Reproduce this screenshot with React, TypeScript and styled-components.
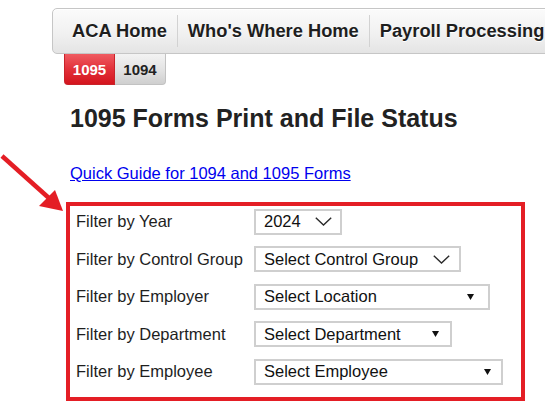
import React from "react";
import styled, { createGlobalStyle } from "styled-components";

const GlobalStyle = createGlobalStyle`
  html, body { margin: 0; padding: 0; background: #ffffff; overflow: hidden; }
  body { font-family: "Liberation Sans", Arial, sans-serif; color: #222; }
`;

const Page = styled.div`
  position: relative;
  width: 545px;
  height: 410px;
  padding-top: 8px;
  box-sizing: border-box;
  overflow: hidden;
`;

const Header = styled.div`
  padding-left: 52px;
`;

const NavBar = styled.nav`
  display: flex;
  align-items: center;
  width: max-content;
  height: 46px;
  box-sizing: border-box;
  padding-left: 9px;
  padding-right: 20px;
  border: 1px solid #c6c6c6;
  border-radius: 5px;
  background: linear-gradient(to bottom, #fbfbfb 0%, #f1f1f1 55%, #e4e4e4 100%);
  box-shadow: inset 0 1px 0 #ffffff;
`;

const NavItem = styled.span`
  padding: 0 10px;
  font-size: 18.3px;
  font-weight: bold;
  color: #1e1e1e;
  white-space: nowrap;
  text-shadow: 0 1px 0 #fff;
`;

const NavSep = styled.span`
  width: 1px;
  height: 32px;
  background: #d2d2d2;
`;

const Tabs = styled.div`
  display: flex;
  margin-left: 12px;
  width: max-content;
`;

const Tab = styled.span<{ $active?: boolean }>`
  display: flex;
  align-items: center;
  justify-content: center;
  width: 51px;
  height: 31px;
  box-sizing: border-box;
  font-size: 15px;
  font-weight: bold;
  color: ${(p) => (p.$active ? "#ffffff" : "#222")};
  background: ${(p) =>
    p.$active
      ? "linear-gradient(to bottom, #ef5b61 0%, #e2313a 50%, #d4151e 100%)"
      : "linear-gradient(to bottom, #f3f3f3 0%, #e2e2e2 55%, #cfcfcf 100%)"};
  border: 1px solid ${(p) => (p.$active ? "#c9232a" : "#c2c2c2")};
  border-top: none;
  ${(p) =>
    p.$active
      ? "border-bottom-left-radius: 4px;"
      : "border-bottom-right-radius: 4px; border-left: none;"}
`;

const Main = styled.main`
  padding-left: 70px;
`;

const Title = styled.h1`
  margin: 18px 0 0;
  font-size: 25px;
  line-height: 30px;
  font-weight: bold;
  color: #222;
`;

const GuideLink = styled.a`
  display: block;
  width: max-content;
  margin-top: 30px;
  font-size: 16.5px;
  line-height: 20px;
  color: #0000ee;
  text-decoration: underline;
`;

const FilterBox = styled.div`
  display: grid;
  grid-template-columns: 178px auto;
  row-gap: 11.5px;
  align-items: center;
  width: 459px;
  box-sizing: border-box;
  margin: 18.5px 0 0 -4px;
  padding: 3px 6px 12px;
  border: 4px solid #e41e25;
`;

const Label = styled.span`
  font-size: 16.5px;
  color: #1e1e1e;
  white-space: nowrap;
`;

const Select = styled.div<{ $width: number; $padRight: number }>`
  display: flex;
  align-items: center;
  justify-content: space-between;
  width: ${(p) => p.$width}px;
  height: 26px;
  box-sizing: border-box;
  padding: 0 ${(p) => p.$padRight}px 0 8px;
  border: 2px solid #cfcfcf;
  background: #fff;
  font-size: 16.5px;
  color: #111;
  white-space: nowrap;
`;

const Chevron = () => (
  <svg width="17" height="9" viewBox="0 0 17 9" aria-hidden="true">
    <polyline points="0.8,0.8 8.5,8 16.2,0.8" fill="none" stroke="#2a2a2a" strokeWidth="1.4" />
  </svg>
);

const Caret = () => (
  <svg width="7" height="6" viewBox="0 0 7 6" aria-hidden="true">
    <polygon points="0,0 7,0 3.5,6" fill="#111" />
  </svg>
);

const ArrowLayer = styled.svg`
  position: absolute;
  left: 0;
  top: 0;
  pointer-events: none;
`;

type Filter = { label: string; value: string; width: number; pad: number; kind: "chevron" | "caret" };

const filters: Filter[] = [
  { label: "Filter by Year", value: "2024", width: 88, pad: 8, kind: "chevron" },
  { label: "Filter by Control Group", value: "Select Control Group", width: 207, pad: 9, kind: "chevron" },
  { label: "Filter by Employer", value: "Select Location", width: 236, pad: 14, kind: "caret" },
  { label: "Filter by Department", value: "Select Department", width: 198, pad: 11, kind: "caret" },
  { label: "Filter by Employee", value: "Select Employee", width: 249, pad: 10, kind: "caret" },
];

export default function App() {
  return (
    <>
      <GlobalStyle />
      <Page>
        <Header>
          <NavBar>
            <NavItem>ACA Home</NavItem>
            <NavSep />
            <NavItem>Who's Where Home</NavItem>
            <NavSep />
            <NavItem>Payroll Processing</NavItem>
          </NavBar>
          <Tabs>
            <Tab $active>1095</Tab>
            <Tab>1094</Tab>
          </Tabs>
        </Header>
        <Main>
          <Title>1095 Forms Print and File Status</Title>
          <GuideLink href="#">Quick Guide for 1094 and 1095 Forms</GuideLink>
          <FilterBox>
            {filters.map((f) => (
              <React.Fragment key={f.label}>
                <Label>{f.label}</Label>
                <Select $width={f.width} $padRight={f.pad}>
                  <span>{f.value}</span>
                  {f.kind === "chevron" ? <Chevron /> : <Caret />}
                </Select>
              </React.Fragment>
            ))}
          </FilterBox>
        </Main>
        <ArrowLayer width="80" height="220" viewBox="0 0 80 220">
          <line x1="2" y1="156" x2="50" y2="199" stroke="#e41e25" strokeWidth="4.5" />
          <polygon points="63,211 39,206 55,190" fill="#e41e25" />
        </ArrowLayer>
      </Page>
    </>
  );
}
